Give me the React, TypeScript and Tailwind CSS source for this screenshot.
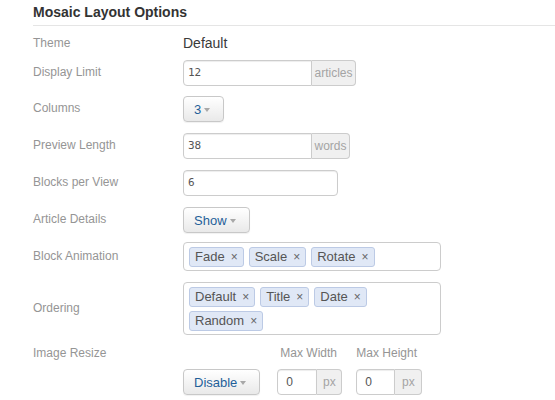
import React from "react";

const Caret = () => (
  <span className="inline-block w-0 h-0 border-l-[3px] border-r-[3px] border-t-[4px] border-l-transparent border-r-transparent border-t-[#a8a8a8]" />
);

function DropBtn({ label }: { label: string }) {
  return (
    <div className="h-[26px] flex items-center pl-[10px] pr-[13px] border border-[#c8c8c8] rounded-[4px] bg-linear-to-b from-white to-[#e9e9e9] shadow-[0_1px_1px_rgba(0,0,0,0.06)] text-[13px] text-[#1f5f99] leading-none">
      <span>{label}</span>
      <span className="ml-[3px] flex items-center pt-[1px]">
        <Caret />
      </span>
    </div>
  );
}

function TextInput({ value, cls, rounded = "rounded-[4px]", pad = "pl-[4px]", sans = false }: { value: string; cls: string; rounded?: string; pad?: string; sans?: boolean }) {
  return (
    <div
      className={`h-[26px] flex items-center border border-[#cccccc] bg-white shadow-[inset_0_1px_1px_rgba(0,0,0,0.075)] text-[#555] ${sans ? "text-[12px]" : "text-[11px]"} ${rounded} ${pad} ${cls}`}
      style={{ fontFamily: sans ? '"Liberation Sans", Arial, sans-serif' : '"DejaVu Sans Mono", monospace' }}
    >
      {value}
    </div>
  );
}

function InputAddon({ value, addon, inputCls, addonCls, pad, sans }: { value: string; addon: string; inputCls: string; addonCls: string; pad?: string; sans?: boolean }) {
  return (
    <div className="flex h-[26px]">
      <TextInput value={value} cls={inputCls} rounded="rounded-l-[4px]" pad={pad} sans={sans} />
      <div className={`h-[26px] flex items-center justify-center border border-l-0 border-[#cccccc] bg-[#f0f0f0] rounded-r-[4px] text-[12px] text-[#a4a4a4] ${addonCls}`}>
        {addon}
      </div>
    </div>
  );
}

function Tag({ label }: { label: string }) {
  return (
    <div className="h-[20px] flex items-center px-[5px] border border-[#bccae5] bg-[#e0e8f6] rounded-[3px] text-[13px] text-[#555] leading-[18px]">
      <span>{label}</span>
      <span className="ml-[6px] text-[12px] text-[#666]">×</span>
    </div>
  );
}

function Row({ label, children, mt }: { label: string; children: React.ReactNode; mt: string }) {
  return (
    <div className={`flex items-center ${mt}`}>
      <div className="w-[150px] shrink-0 text-[12px] leading-[16px] text-[#959595] pb-[2px]">{label}</div>
      <div className="flex">{children}</div>
    </div>
  );
}

export default function App() {
  return (
    <div
      className="w-[555px] h-[400px] bg-white pl-[33px] overflow-hidden"
      style={{ fontFamily: '"Liberation Sans", Arial, sans-serif' }}
    >
      <div className="h-[26px] pt-[2px] border-b border-[#e5e5e5] text-[14px] leading-[20px] font-bold text-[#333]">
        Mosaic Layout Options
      </div>

      <Row label="Theme" mt="mt-[5px]">
        <div className="h-[26px] flex items-center text-[14px] text-[#3a3a3a] pb-[1px]">Default</div>
      </Row>

      <Row label="Display Limit" mt="mt-[3px]">
        <InputAddon value="12" addon="articles" inputCls="w-[129px]" addonCls="w-[44px]" />
      </Row>

      <Row label="Columns" mt="mt-[10px]">
        <DropBtn label="3" />
      </Row>

      <Row label="Preview Length" mt="mt-[11px]">
        <InputAddon value="38" addon="words" inputCls="w-[129px]" addonCls="w-[38px]" />
      </Row>

      <Row label="Blocks per View" mt="mt-[11px]">
        <TextInput value="6" cls="w-[155px]" />
      </Row>

      <Row label="Article Details" mt="mt-[11px]">
        <DropBtn label="Show" />
      </Row>

      <Row label="Block Animation" mt="mt-[9px]">
        <div className="w-[258px] border border-[#cccccc] rounded-[4px] px-[5px] pt-[4px] pb-[3px] flex flex-wrap gap-x-[5px] gap-y-[4px]">
          <Tag label="Fade" />
          <Tag label="Scale" />
          <Tag label="Rotate" />
        </div>
      </Row>

      <Row label="Ordering" mt="mt-[11px]">
        <div className="w-[258px] border border-[#cccccc] rounded-[4px] px-[5px] pt-[4px] pb-[3px] flex flex-wrap gap-x-[5px] gap-y-[4px]">
          <Tag label="Default" />
          <Tag label="Title" />
          <Tag label="Date" />
          <Tag label="Random" />
        </div>
      </Row>

      <div className="flex mt-[10px]">
        <div className="w-[150px] shrink-0 text-[12px] leading-[16px] text-[#959595]">Image Resize</div>
        <div className="flex items-end">
          <DropBtn label="Disable" />
          <div className="ml-[17px] flex flex-col">
            <div className="text-[12px] leading-[16px] text-[#959595] pl-[3px]">Max Width</div>
            <div className="mt-[8px]">
              <InputAddon value="0" addon="px" inputCls="w-[40px]" addonCls="w-[25px]" pad="pl-[8px]" sans />
            </div>
          </div>
          <div className="ml-[14px] flex flex-col">
            <div className="text-[12px] leading-[16px] text-[#959595]">Max Height</div>
            <div className="mt-[8px]">
              <InputAddon value="0" addon="px" inputCls="w-[39px]" addonCls="w-[27px]" pad="pl-[8px]" sans />
            </div>
          </div>
        </div>
      </div>
    </div>
  );
}
